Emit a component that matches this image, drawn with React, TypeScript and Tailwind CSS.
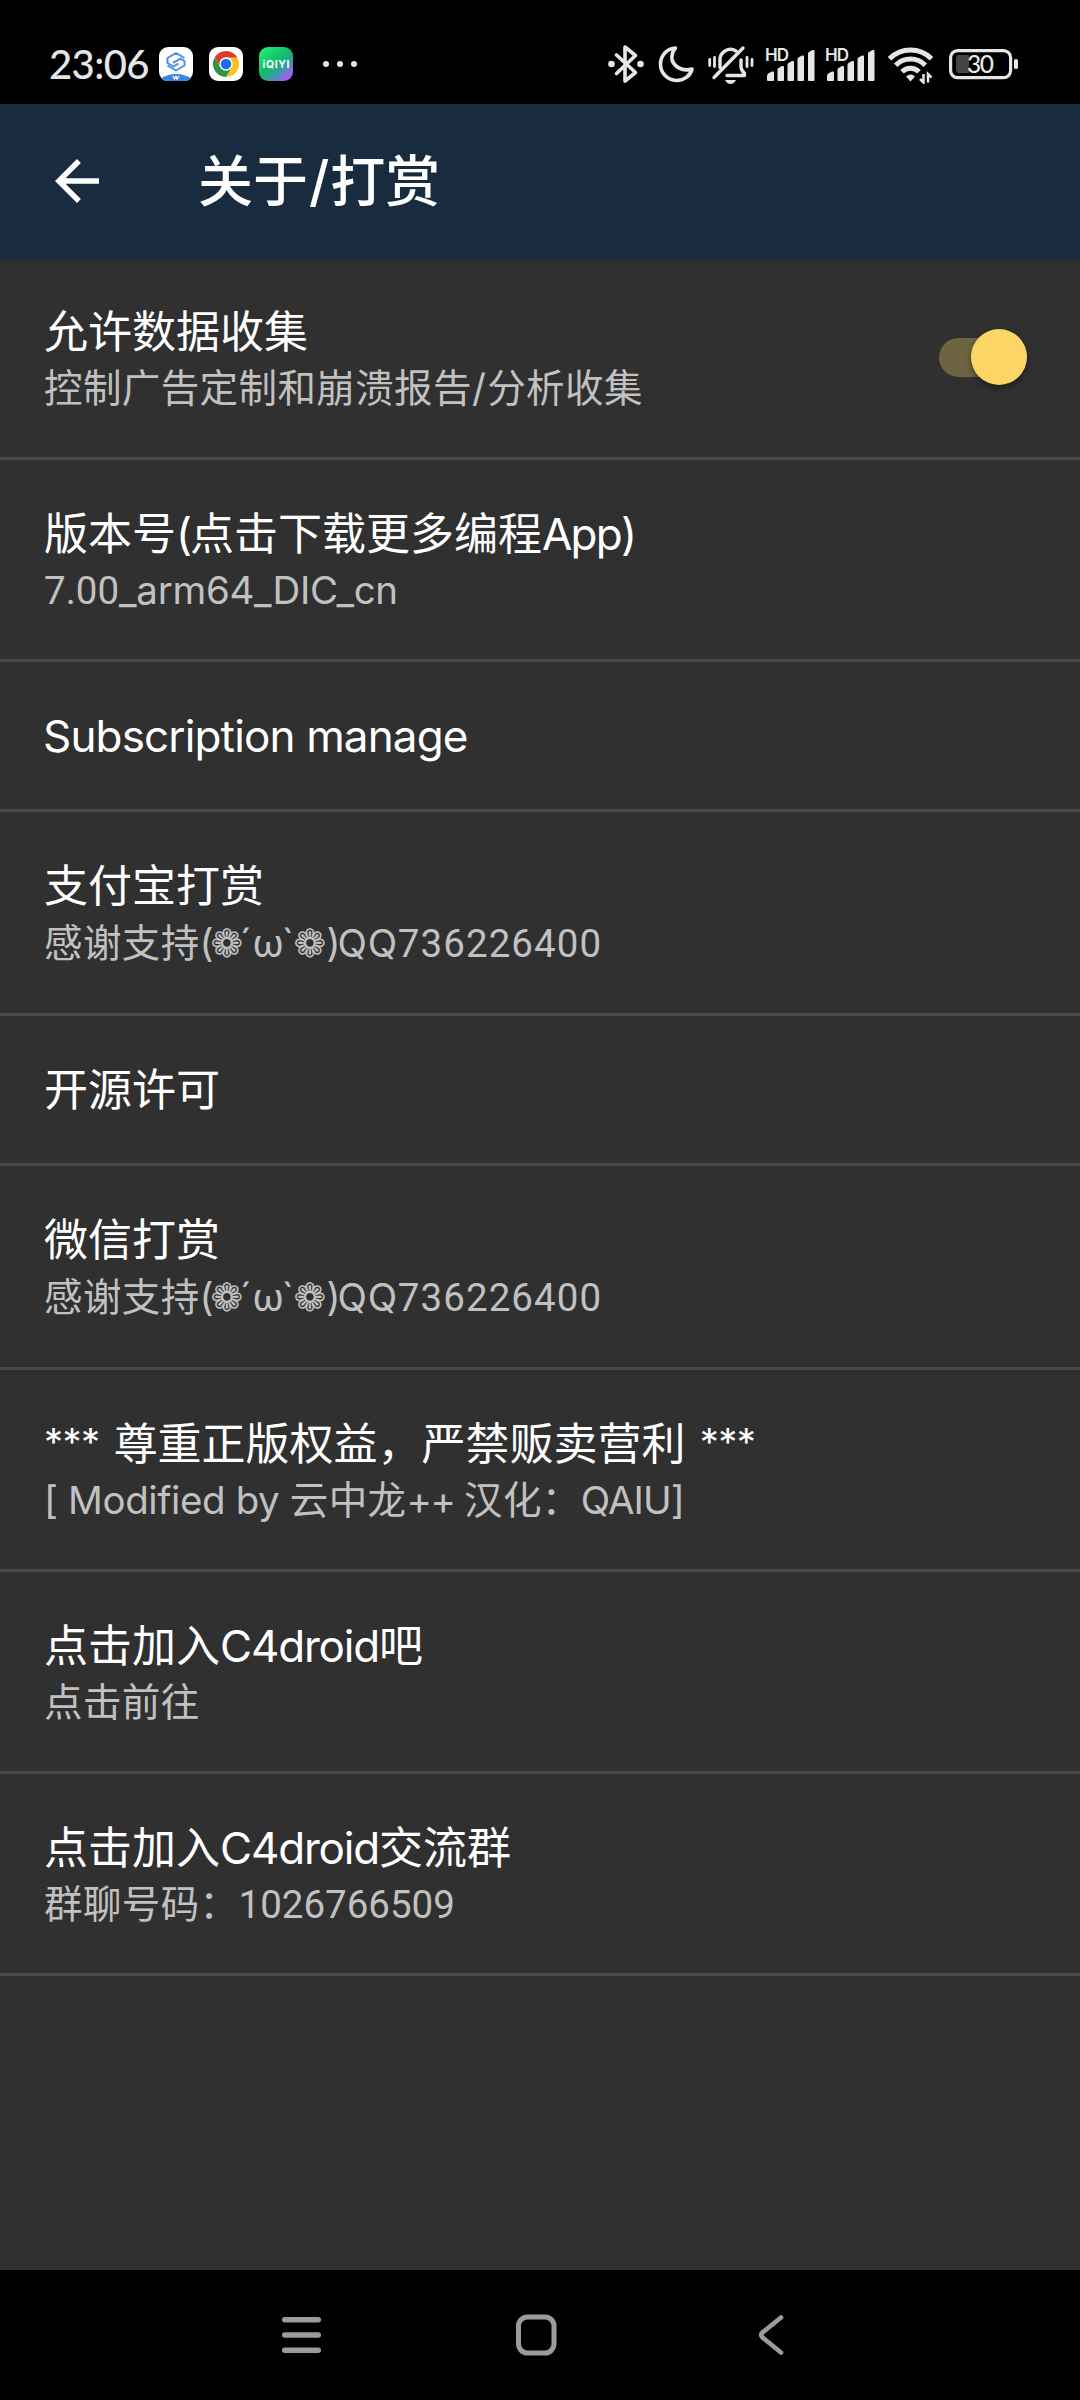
import { useState } from 'react'
import type { ReactNode } from 'react'
import clsx from 'clsx'

// Latin run inside a line, leading-[0] keeps it from growing the line box
function En({ children, className }: { children: ReactNode; className?: string }) {
  return <span className={clsx('leading-[0] whitespace-pre', className)}>{children}</span>
}

function Thanks() {
  return (
    <>
      感谢支持
      <En className="inline-block w-[11px]">(</En>
      <En className="inline-block w-[33px] font-['DejaVu_Sans'] text-[39px]">❁</En>
      <En className="inline-block w-[9px] -indent-[4px]">´</En>
      <En className="inline-block w-[32px] font-[Roboto] text-[38px]">ω</En>
      <En className="inline-block w-[9px] -indent-[3px]">`</En>
      <En className="inline-block w-[33px] font-['DejaVu_Sans'] text-[39px]">❁</En>
      <En className="inline-block w-[11px]">)</En>
      <En className="tracking-[0.6px]">QQ</En>
      <En className="font-[Roboto] tracking-[1.1px]">736226400</En>
    </>
  )
}

type Item = {
  id: string
  title: ReactNode
  summary?: ReactNode
  tall?: boolean
  toggle?: boolean
}

const items: Item[] = [
  {
    id: 'collect',
    title: '允许数据收集',
    summary: <>控制广告定制和崩溃报告<En className="pr-px">/</En>分析收集</>,
    toggle: true,
  },
  {
    id: 'version',
    title: <>版本号<En className="tracking-[-2px]">(</En>点击下载更多编程<En className="tracking-[-1.8px]">App)</En></>,
    summary: <><En className="font-[Roboto] tracking-normal">7.00</En><En className="tracking-[-0.3px]">_arm64_DIC_cn</En></>,
  },
  { id: 'subscription', title: <En className="-ml-px tracking-[-0.85px]">Subscription manage</En> },
  { id: 'alipay', title: '支付宝打赏', summary: <Thanks />, tall: true },
  { id: 'license', title: '开源许可' },
  { id: 'wechat', title: '微信打赏', summary: <Thanks />, tall: true },
  {
    id: 'notice',
    title: (
      <>
        <En className="relative -top-[4px] mr-[14px] text-[38px] tracking-[-0.5px]">***</En>
        尊重正版权益，严禁贩卖营利
        <En className="relative -top-[4px] ml-[14px] text-[38px] tracking-[-0.5px]">***</En>
      </>
    ),
    summary: (
      <>
        <En className="tracking-[-0.4px]">[ Modified by </En>
        云中龙
        <En className="tracking-[-1.4px]">++ </En>
        汉化：
        <En className="tracking-[-0.9px]">QAIU]</En>
      </>
    ),
  },
  { id: 'tieba', title: <>点击加入<En className="tracking-[-1.2px]">C4droid</En>吧</>, summary: '点击前往' },
  {
    id: 'group',
    title: <>点击加入<En className="tracking-[-1.2px]">C4droid</En>交流群</>,
    summary: <>群聊号码：<En className="font-[Roboto] tracking-normal">1026766509</En></>,
  },
]

function Toggle({ on, onClick }: { on: boolean; onClick: () => void }) {
  return (
    <button type="button" role="switch" aria-checked={on} onClick={onClick} className="mt-[71px] mr-[53px] flex h-14 w-[88px] items-center">
      <span className={clsx('flex h-[39px] w-[80px] items-center rounded-full', on ? 'bg-[#6e6441]' : 'bg-[#5f5f5f]')}>
        <span
          className={clsx(
            'size-14 shrink-0 rounded-full shadow-[0_3px_6px_rgba(0,0,0,0.4)]',
            on ? 'ml-8 bg-[#fbd666]' : 'bg-[#bdbdbd]',
          )}
        />
      </span>
    </button>
  )
}

function SignalIcon() {
  return (
    <svg className="h-10 w-[51px]" viewBox="0 0 51 40" fill="#e6e6e6">
      <text x="0" y="16.500" fontSize="17" fontWeight="600" fontFamily="Inter, sans-serif" textLength="24">HD</text>
      <path d="M2 36v-4q0-2 2-3l3-1.500q2-.5 2 1v7.500q0 1-1 1H3q-1 0-1-1z" />
      <path d="M12.500 36V25.500q0-1 1-1.500l3.500-2q2-.5 2 1V36q0 1-1 1h-4.500q-1 0-1-1z" />
      <path d="M22.500 36V20.500q0-1 1-1.500l3.500-2q2-.5 2 1V36q0 1-1 1h-4.500q-1 0-1-1z" />
      <path d="M32.500 36V15q0-1 1-1.500l3.500-2q2-.5 2 1V36q0 1-1 1h-4.500q-1 0-1-1z" />
      <path d="M43 36V9.500q0-1 1-1.500l3.500-2q2-.5 2 1V36q0 1-1 1H44q-1 0-1-1z" />
    </svg>
  )
}

function StatusBar() {
  return (
    <header className="flex h-[104px] items-center bg-black pt-6 pl-[49px] text-[#e6e6e6]">
      <span className="w-[110px] font-[Lato] text-[40px] leading-10 font-medium tracking-[-0.6px]">23:06</span>

      <svg className="size-[34px]" viewBox="0 0 34 34">
        <rect width="34" height="34" rx="9" fill="#fff" />
        <path d="M2 31.500Q8 27 17 27t15 4.500Q30 34 25 34H9q-5 0-7-2.500z" fill="#3f82e8" />
        <path d="M25.500 11 17 6 8.500 11v5l6 3.500 5-3M8.500 18.500 17 23.500l8.500-5v-4.500l-4-2.300-7.500 4.200" fill="none" stroke="#4a90e6" strokeWidth="2" strokeLinejoin="round" />
        <path d="m14 29 1.500 3 1.500-2.500 1 2.500 2-3" fill="none" stroke="#fff" strokeWidth="1.300" />
      </svg>

      <svg className="ml-4 size-[34px]" viewBox="0 0 34 34">
        <rect width="34" height="34" rx="9" fill="#fff" />
        <path d="M17 17 5.740 10.500A13 13 0 0 1 28.260 10.500z" fill="#db3a2c" />
        <path d="M17 17V10.500H28.260A13 13 0 0 1 17 30z" fill="#fcc31e" />
        <path d="M17 17 22.630 20.250 17 30A13 13 0 0 1 5.740 10.500L11.370 20.250z" fill="#2b9447" />
        <path d="M5.740 10.500 11.400 20.200 17 10.500z" fill="#db3a2c" />
        <circle cx="17" cy="17" r="6.700" fill="#fff" />
        <circle cx="17" cy="17" r="5.300" fill="#1b6fe8" />
      </svg>

      <svg className="ml-4 size-[34px]" viewBox="0 0 34 34">
        <defs>
          <linearGradient id="iqiyi" x1="0.1" y1="0" x2="0.95" y2="1">
            <stop offset="0" stopColor="#1fee78" />
            <stop offset="0.45" stopColor="#10bd6a" />
            <stop offset="0.68" stopColor="#3d97a8" />
            <stop offset="0.85" stopColor="#9a62f2" />
            <stop offset="1" stopColor="#c04cff" />
          </linearGradient>
        </defs>
        <rect width="34" height="34" rx="9" fill="url(#iqiyi)" />
        <text x="3.500" y="21" fontSize="10.500" fontWeight="700" fontFamily="Inter, sans-serif" fill="#fff" textLength="27">iQIYI</text>
      </svg>

      <svg className="ml-[30px] h-[34px] w-[34px]" viewBox="0 0 34 34" fill="#e6e6e6">
        <circle cx="3" cy="17" r="3" />
        <circle cx="17" cy="17" r="3" />
        <circle cx="31" cy="17" r="3" />
      </svg>

      {/* bluetooth */}
      <svg className="ml-[251px] h-10 w-9" viewBox="0 0 36 40" fill="none" stroke="#e6e6e6" strokeWidth="3.600" strokeLinejoin="round" strokeLinecap="round">
        <path d="m8.500 11 19 17.500-10.500 8.500V3l10.500 8.500L8.500 29.500" />
        <circle cx="3.500" cy="20" r="3.300" fill="#e6e6e6" stroke="none" />
        <circle cx="32.500" cy="20" r="3.300" fill="#e6e6e6" stroke="none" />
      </svg>

      {/* do not disturb */}
      <svg className="ml-[14px] h-10 w-[37px]" viewBox="0 0 37 40" fill="none" stroke="#e6e6e6" strokeWidth="3.600" strokeLinejoin="round">
        <path d="M17.500 4C9 4.500 2.500 11.500 2.500 20A16.300 16.300 0 0 0 18.500 36.500C26.500 36.500 32.500 31.500 34 25 24 28 15.500 22 14 15.500 13.500 11 14.500 7.500 17.500 4z" />
      </svg>

      {/* vibrate, ringer off */}
      <svg className="ml-[13px] h-10 w-[46px]" viewBox="0 0 46 40" fill="none" stroke="#e6e6e6" strokeWidth="3.400" strokeLinecap="round" strokeLinejoin="round">
        <path d="M12 23.500V16a10.500 10.500 0 0 1 16-9" />
        <path d="M33 16v7q0 3 3.500 6.500v2H19" />
        <path d="M6 33.500 35 4" />
        <path d="M17 36h11q-2 4-5.500 4T17 36z" fill="#e6e6e6" stroke="none" />
        <path d="M1.700 15.500v6M6.500 13.500v9M39 13.500v9M44 15.500v6" strokeWidth="2.800" />
      </svg>

      <div className="ml-[11px] flex gap-[9px]">
        <SignalIcon />
        <SignalIcon />
      </div>

      {/* wifi */}
      <svg className="ml-[11px] h-10 w-[48px]" viewBox="0 0 48 40" fill="none" stroke="#e6e6e6" strokeWidth="5">
        <path d="M2.500 14.800a29.500 29.500 0 0 1 42 0" />
        <path d="M8.700 21.300a20.700 20.700 0 0 1 29.600 0" />
        <path d="M15 27.800a12 12 0 0 1 17 0" />
        <path d="m19 32.500q4.500-4 9 0L23.500 37.500z" fill="#e6e6e6" stroke="none" />
        <path d="M36.500 30v8.500l-3.500-3.500M41 38.500V30l3.500 3.500" strokeWidth="2.500" />
      </svg>

      {/* battery */}
      <svg className="ml-[14px] h-10 w-[70px]" viewBox="0 0 70 40" fill="none">
        <rect x="1.600" y="6.600" width="60" height="27" rx="7" stroke="#e6e6e6" strokeWidth="3.200" />
        <path d="M20 11v18H10q-3 0-3-3V14q0-3 3-3z" fill="#454545" />
        <rect x="65" y="15" width="4" height="10" rx="1.800" fill="#e6e6e6" />
        <text x="18" y="28.800" fontSize="24.500" fontWeight="500" fontFamily="Lato, sans-serif" fill="#e6e6e6" textLength="27">30</text>
      </svg>
    </header>
  )
}

function NavBar() {
  return (
    <nav className="flex h-[130px] items-center bg-black pl-[282px]">
      <svg className="h-11 w-[39px]" viewBox="0 0 39 44" stroke="#9b9b9b" strokeWidth="5.400" strokeLinecap="round">
        <path d="M2.700 6.700h33.600M2.700 22h33.600M2.700 37.300h33.600" />
      </svg>
      <svg className="ml-[195px] h-11 w-[41px]" viewBox="0 0 41 44" fill="none" stroke="#9b9b9b" strokeWidth="5">
        <rect x="2.500" y="4" width="35.500" height="36" rx="9" />
      </svg>
      <svg className="ml-[201px] h-11 w-[26px]" viewBox="0 0 26 44" fill="none" stroke="#9b9b9b" strokeWidth="4.600" strokeLinecap="round">
        <path d="M23 4.500 4.500 19.500Q2 22 4.500 24.500L23 39.500" />
      </svg>
    </nav>
  )
}

export default function App() {
  const [collect, setCollect] = useState(true)

  return (
    <div lang="zh-CN" className="flex h-[2400px] w-[1080px] flex-col overflow-hidden bg-[#303030] font-[Inter,'Noto_Sans_CJK_SC',sans-serif]">
      <StatusBar />

      <div className="flex h-[154px] items-center bg-[#192b3f] pl-11 text-white">
        <svg className="size-[66px]" viewBox="0 0 24 24" fill="currentColor">
          <path d="M20 11H7.830l5.590-5.590L12 4l-8 8 8 8 1.410-1.410L7.830 13H20v-2z" />
        </svg>
        <h1 className="ml-[88px] text-[55px] leading-[60px] font-medium">
          关于<En className="px-px">/</En>打赏
        </h1>
      </div>
      <div className="-mb-2 h-2 bg-linear-to-b from-black/15 to-transparent" />

      <main className="flex-1">
        {items.map(item => (
          <div key={item.id} className="flex items-start justify-between border-b-3 border-[#494949]">
            <div className="pt-11 pb-[43px] pl-11 whitespace-nowrap">
              <p className="h-[60px] text-[44px] leading-[60px] text-white">{item.title}</p>
              {item.summary && (
                <p
                  className={clsx(
                    'text-[38.500px] tracking-[0.4px] text-[#c1c1c1]',
                    item.tall ? 'h-[54px] leading-[54px]' : 'h-[52px] leading-[52px]',
                  )}
                >
                  {item.summary}
                </p>
              )}
            </div>
            {item.toggle && <Toggle on={collect} onClick={() => setCollect(!collect)} />}
          </div>
        ))}
      </main>

      <NavBar />
    </div>
  )
}
